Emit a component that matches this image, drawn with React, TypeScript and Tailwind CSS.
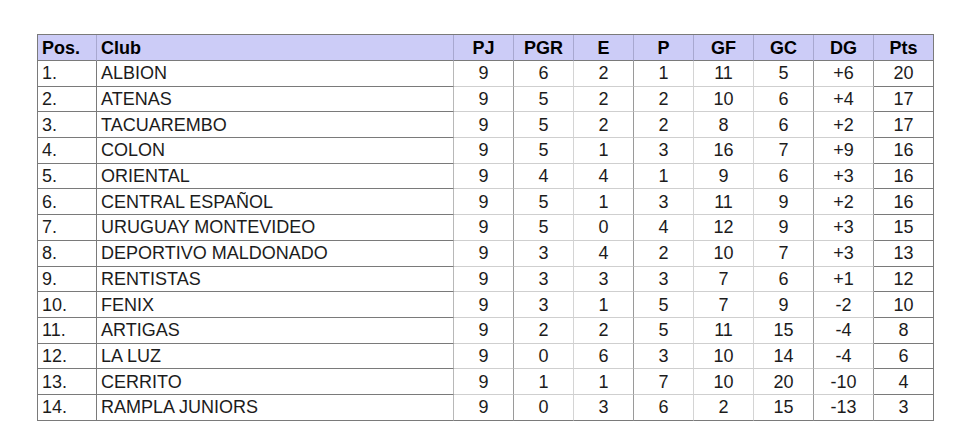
import React from "react";

const rows: [string, string, string, string, string, string, string, string, string, string][] = [
  ["1.", "ALBION", "9", "6", "2", "1", "11", "5", "+6", "20"],
  ["2.", "ATENAS", "9", "5", "2", "2", "10", "6", "+4", "17"],
  ["3.", "TACUAREMBO", "9", "5", "2", "2", "8", "6", "+2", "17"],
  ["4.", "COLON", "9", "5", "1", "3", "16", "7", "+9", "16"],
  ["5.", "ORIENTAL", "9", "4", "4", "1", "9", "6", "+3", "16"],
  ["6.", "CENTRAL ESPAÑOL", "9", "5", "1", "3", "11", "9", "+2", "16"],
  ["7.", "URUGUAY MONTEVIDEO", "9", "5", "0", "4", "12", "9", "+3", "15"],
  ["8.", "DEPORTIVO MALDONADO", "9", "3", "4", "2", "10", "7", "+3", "13"],
  ["9.", "RENTISTAS", "9", "3", "3", "3", "7", "6", "+1", "12"],
  ["10.", "FENIX", "9", "3", "1", "5", "7", "9", "-2", "10"],
  ["11.", "ARTIGAS", "9", "2", "2", "5", "11", "15", "-4", "8"],
  ["12.", "LA LUZ", "9", "0", "6", "3", "10", "14", "-4", "6"],
  ["13.", "CERRITO", "9", "1", "1", "7", "10", "20", "-10", "4"],
  ["14.", "RAMPLA JUNIORS", "9", "0", "3", "6", "2", "15", "-13", "3"],
];

const headers = ["Pos.", "Club", "PJ", "PGR", "E", "P", "GF", "GC", "DG", "Pts"];

// right border colour per column (dark where visible separators are)
const rightBorder = [
  "border-r-[#7a7a7a]",
  "border-r-[#b8b8b8]",
  "border-r-[#9a9a9a]",
  "border-r-[#d4d4d4]",
  "border-r-[#9a9a9a]",
  "border-r-[#d4d4d4]",
  "border-r-[#d4d4d4]",
  "border-r-[#9a9a9a]",
  "border-r-[#9a9a9a]",
  "border-r-[#7a7a7a]",
];

export default function App() {
  return (
    <div className="w-[978px] h-[443px] bg-white pt-[34px] pl-[37px]" style={{ fontFamily: '"Liberation Sans", Arial, sans-serif' }}>
      <div className="grid grid-cols-[59px_357px_repeat(8,60px)] w-[897px] border-t border-l border-[#7a7a7a] text-[18px] leading-none">
        {headers.map((h, i) => (
          <div
            key={h}
            className={`h-[26px] bg-[#ccccf7] font-bold text-black flex items-center border-b border-b-[#7a7a7a] border-r ${i === 9 ? "border-r-[#7a7a7a]" : "border-r-[#a8a8d0]"} ${i < 2 ? "justify-start pl-[4px]" : "justify-center"}`}
          >
            {h}
          </div>
        ))}
        {rows.map((r, ri) =>
          r.map((c, ci) => (
            <div
              key={`${ri}-${ci}`}
              className={`h-[25.7px] flex items-center text-[#1c1c1c] border-r border-b ${rightBorder[ci]} ${
                ci < 2 || ri === rows.length - 1 || ci === 9 ? "border-b-[#7a7a7a]" : "border-b-[#cfcfcf]"
              } ${ci < 2 ? "justify-start pl-[4px]" : "justify-center"}`}
            >
              {c}
            </div>
          ))
        )}
      </div>
    </div>
  );
}
